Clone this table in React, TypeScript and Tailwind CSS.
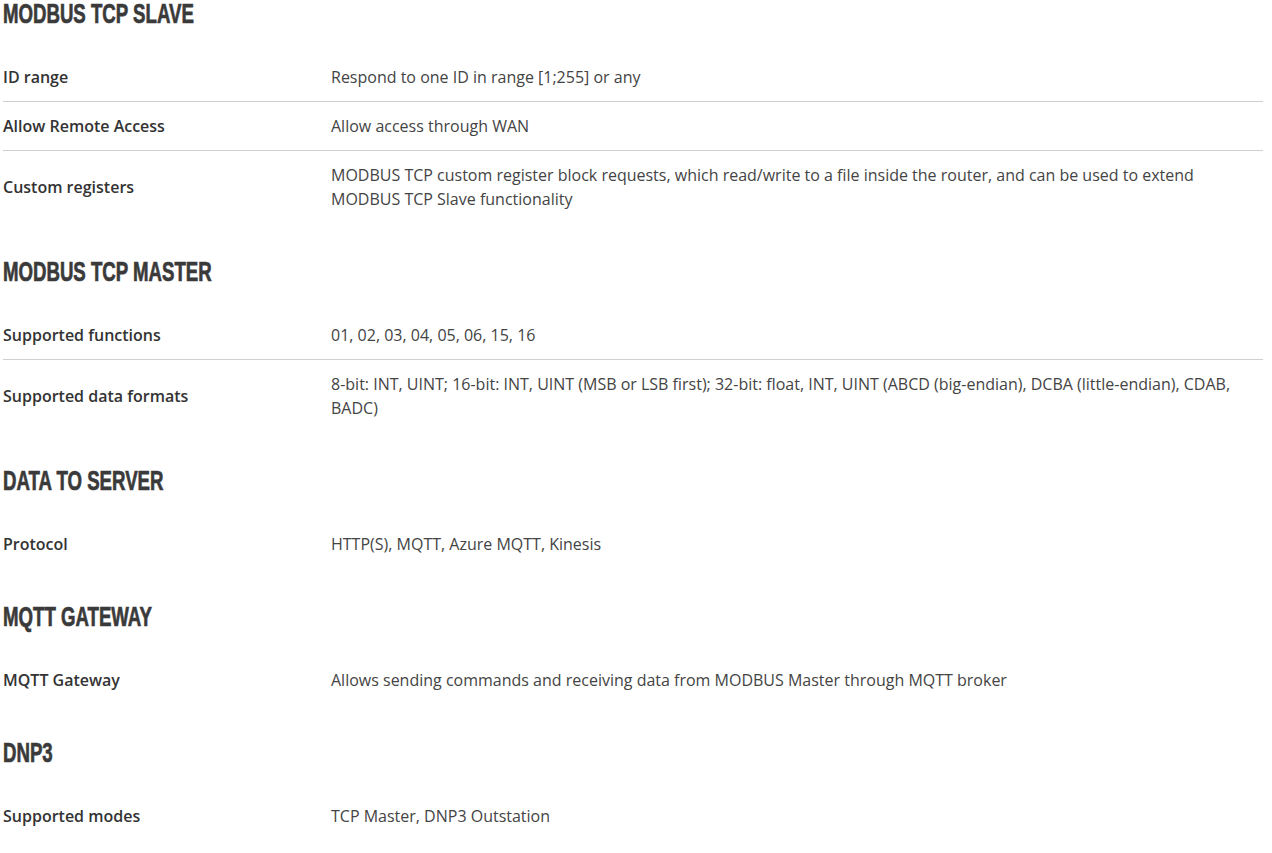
const sections = [
  {
    title: 'MODBUS TCP SLAVE',
    rows: [
      { label: 'ID range', value: 'Respond to one ID in range [1;255] or any' },
      { label: 'Allow Remote Access', value: 'Allow access through WAN' },
      {
        label: 'Custom registers',
        value:
          'MODBUS TCP custom register block requests, which read/write to a file inside the router, and can be used to extend MODBUS TCP Slave functionality',
      },
    ],
  },
  {
    title: 'MODBUS TCP MASTER',
    rows: [
      { label: 'Supported functions', value: '01, 02, 03, 04, 05, 06, 15, 16' },
      {
        label: 'Supported data formats',
        value:
          '8-bit: INT, UINT; 16-bit: INT, UINT (MSB or LSB first); 32-bit: float, INT, UINT (ABCD (big-endian), DCBA (little-endian), CDAB, BADC)',
      },
    ],
  },
  {
    title: 'DATA TO SERVER',
    rows: [{ label: 'Protocol', value: 'HTTP(S), MQTT, Azure MQTT, Kinesis' }],
  },
  {
    title: 'MQTT GATEWAY',
    rows: [
      {
        label: 'MQTT Gateway',
        value: 'Allows sending commands and receiving data from MODBUS Master through MQTT broker',
      },
    ],
  },
  {
    title: 'DNP3',
    rows: [{ label: 'Supported modes', value: 'TCP Master, DNP3 Outstation' }],
  },
];

export default function App() {
  return (
    <div className="min-h-screen bg-white pl-[3px] font-['Open_Sans',sans-serif]">
      <div className="w-[1260px]">
        {sections.map((section, i) => (
          <div key={section.title} className={i === 0 ? '' : 'mt-[35px]'}>
            {/* condensed display heading */}
            <h2 className="mb-[23px] h-[30px] text-[27px] leading-[29px] font-bold text-[#3a3a3a] font-['Liberation_Sans',sans-serif] origin-left scale-x-[0.69] [-webkit-text-stroke:0.7px_#3a3a3a]">
              {section.title}
            </h2>
            {section.rows.map((row, j) => (
              <div
                key={row.label}
                className={`flex items-center py-3 text-[16px] leading-6 ${
                  j < section.rows.length - 1 ? 'border-b border-[#cfcfcf]' : ''
                }`}
              >
                <div className="w-[328px] shrink-0 font-semibold text-[#333]">{row.label}</div>
                <div className="flex-1 text-[#444]">{row.value}</div>
              </div>
            ))}
          </div>
        ))}
      </div>
    </div>
  );
}
